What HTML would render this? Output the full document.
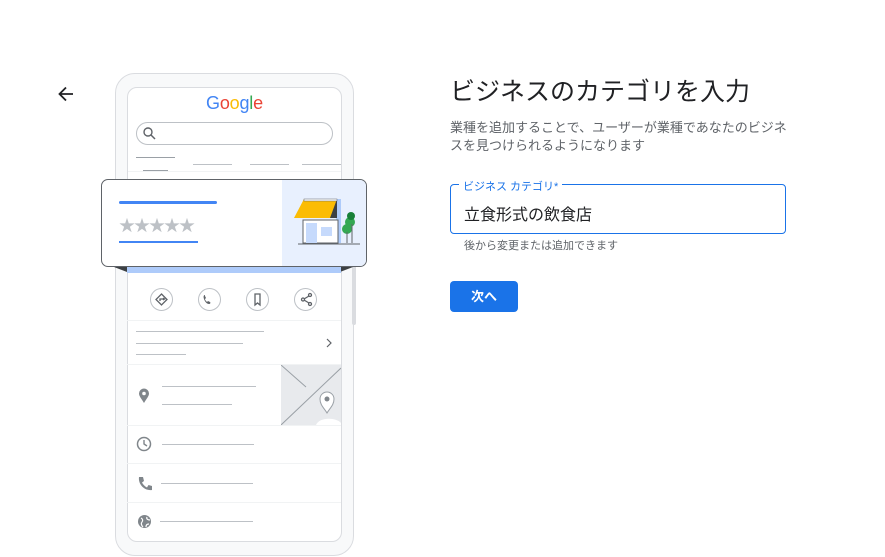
<!DOCTYPE html>
<html><head><meta charset="utf-8"><style>
*{margin:0;padding:0;box-sizing:border-box}
body{width:885px;height:557px;background:#fff;position:relative;overflow:hidden;font-family:"Liberation Sans","Noto Sans CJK JP",sans-serif;color:#202124}
.a{position:absolute}
.ln{position:absolute;height:1px;background:#bdc1c6}
.row{position:absolute;left:127px;width:214px;border-top:1px solid #f1f3f4}
.ci{position:absolute;width:23px;height:23px;border:1.3px solid #bdc1c6;border-radius:50%;top:288px}
</style></head><body>
<svg class="a" style="left:56px;top:85px" width="20" height="18" viewBox="0 0 20 18"><path d="M17 9H4M10 2.5L3.5 9 10 15.5" stroke="#202124" stroke-width="1.8" fill="none"/></svg>

<div class="a" style="left:115px;top:73px;width:239px;height:483px;border:1.5px solid #dadce0;border-radius:20px;background:#f8f9fa"></div>
<div class="a" style="left:127px;top:87px;width:215px;height:455px;border:1px solid #dadce0;border-radius:10px;background:#fff"></div>
<div class="a" style="left:352px;top:265px;width:4px;height:60px;background:#dadce0;border-radius:2px"></div>
<div class="a" style="left:206px;top:93px;font-size:18px;letter-spacing:-0.2px"><span style="color:#4285f4">G</span><span style="color:#ea4335">o</span><span style="color:#fbbc05">o</span><span style="color:#4285f4">g</span><span style="color:#34a853">l</span><span style="color:#ea4335">e</span></div>
<div class="a" style="left:136px;top:122px;width:197px;height:23px;border:1.3px solid #bdc1c6;border-radius:12px"></div>
<svg class="a" style="left:142px;top:126px" width="14" height="14"><circle cx="6" cy="6" r="4" stroke="#5f6368" stroke-width="1.4" fill="none"/><path d="M9 9l4 4" stroke="#5f6368" stroke-width="1.5"/></svg>
<div class="ln" style="left:136px;top:157px;width:39px;background:#9aa0a6"></div>
<div class="ln" style="left:143px;top:170px;width:25px;background:#9aa0a6"></div>
<div class="ln" style="left:193px;top:164px;width:39px"></div>
<div class="ln" style="left:250px;top:164px;width:39px"></div>
<div class="ln" style="left:302px;top:164px;width:39px"></div>
<div class="ln" style="left:128px;top:171px;width:213px;background:#f1f3f4"></div>

<svg class="a" style="left:100px;top:262px" width="267" height="12"><path d="M1 0L27 10V0Z" fill="#3c4043"/><path d="M266 0L240 10V0Z" fill="#3c4043"/></svg>
<div class="a" style="left:127px;top:265px;width:214px;height:8px;background:#aecbfa"></div>
<div class="a" style="left:101px;top:179px;width:266px;height:88px;border:1.3px solid #5f6368;border-radius:7px;background:#fff;overflow:hidden">
 <div class="a" style="left:180px;top:0;width:86px;height:88px;background:#e8f0fe"></div>
 <div class="a" style="left:17px;top:21px;width:98px;height:3px;background:#4285f4;border-radius:2px"></div>
 <div class="a" style="left:17px;top:32px;font-size:16px;color:#bdc1c6;letter-spacing:-1px">★★★★★</div>
 <div class="a" style="left:17px;top:61px;width:79px;height:2px;background:#4285f4"></div>
 <svg class="a" style="left:188px;top:16px" width="70" height="56"><rect x="46" y="3" width="5" height="44" fill="#aecbfa"/><rect x="13" y="24" width="35" height="23" fill="#fff" stroke="#5f6368"/><rect x="16" y="27" width="11" height="20" fill="#c6dafc"/><rect x="31" y="31" width="11" height="9" fill="#c6dafc"/><path d="M4 22L14 3H47V22Z" fill="#fbbc04"/><path d="M40 22L47 3V22Z" fill="#3c4043"/><rect x="14" y="3" width="33" height="2" fill="#fff" stroke="#5f6368" stroke-width=".5"/><circle cx="60" cy="26" r="5" fill="#34a853"/><circle cx="57" cy="33" r="5" fill="#34a853"/><circle cx="61" cy="20" r="4" fill="#188038"/><path d="M57 36V47M62 28V47" stroke="#5f6368"/><path d="M8 48H70" stroke="#5f6368"/></svg>
</div>

<div class="ci" style="left:150px"></div><div class="ci" style="left:198px"></div><div class="ci" style="left:246px"></div><div class="ci" style="left:294px"></div>
<svg class="a" style="left:150px;top:288px" width="180" height="23" fill="none" stroke="#5f6368" stroke-width="1.3"><path d="M11.5 6L17 11.5 11.5 17 6 11.5Z"/><path d="M10 13v-2h4M13 10l1.5 1-1.5 1"/><path d="M55 7c-1 0-2 1-1 4s3 5 5 5c1 0 2-1 1-2l-2-1-1 1c-1-1-2-2-2-3l1-1-1-2z" fill="#5f6368" stroke="none"/><path d="M105 6h5v11l-2.5-2-2.5 2z"/><circle cx="160" cy="7" r="1.5"/><circle cx="153" cy="11.5" r="1.5"/><circle cx="160" cy="16" r="1.5"/><path d="M154 11l5-3M154 12l5 3"/></svg>

<div class="row" style="top:320px;height:44px"></div>
<div class="ln" style="left:136px;top:331px;width:128px"></div>
<div class="ln" style="left:136px;top:343px;width:107px"></div>
<div class="ln" style="left:136px;top:354px;width:50px"></div>
<svg class="a" style="left:325px;top:338px" width="8" height="10"><path d="M2 1l4 4-4 4" stroke="#5f6368" stroke-width="1.2" fill="none"/></svg>
<div class="row" style="top:364px;height:61px"></div>
<svg class="a" style="left:281px;top:365px" width="60" height="60"><rect width="60" height="60" fill="#e8eaed"/><path d="M0 0L25 22M0 60L60 3" stroke="#9aa0a6"/><path d="M35 60c3-8 20-8 25-2v2z" fill="#fff"/><path d="M46 48c-3-5-7-8-7-14a7 7 0 0114 0c0 6-4 9-7 14z" fill="#fff" stroke="#9aa0a6"/><circle cx="46" cy="34" r="2.5" fill="#80868b"/></svg>
<svg class="a" style="left:137px;top:387px" width="14" height="18"><path d="M7 16C4 11 2 9 2 6.5a5 5 0 0110 0C12 9 10 11 7 16z" fill="#80868b"/><circle cx="7" cy="6.5" r="1.8" fill="#fff"/></svg>
<div class="ln" style="left:162px;top:386px;width:94px"></div>
<div class="ln" style="left:162px;top:404px;width:70px"></div>
<div class="row" style="top:425px;height:38px"></div>
<svg class="a" style="left:136px;top:436px" width="16" height="16"><circle cx="8" cy="8" r="6.5" stroke="#80868b" stroke-width="1.5" fill="none"/><path d="M8 4v4l3 2" stroke="#80868b" stroke-width="1.4" fill="none"/></svg>
<div class="ln" style="left:162px;top:444px;width:92px"></div>
<div class="row" style="top:463px;height:39px"></div>
<svg class="a" style="left:137px;top:476px" width="15" height="15"><path d="M2 1h4l1 4-2 1.5c1 2 3 4 5 5L11.5 9l3.5 1v4c-8 1-14-6-13-13z" fill="#80868b"/></svg>
<div class="ln" style="left:161px;top:483px;width:92px"></div>
<div class="row" style="top:502px;height:39px"></div>
<svg class="a" style="left:137px;top:514px" width="16" height="16"><circle cx="7.5" cy="7.5" r="6.5" fill="#80868b"/><path d="M4 4c2 1 2 3 1 4s-1 3 1 5M10 3c-1 2 1 3 3 3M9 13c0-2 1-3 3-3" stroke="#fff" stroke-width="1.2" fill="none"/></svg>
<div class="ln" style="left:160px;top:521px;width:93px"></div>

<div class="a" style="left:450px;top:72px;font-size:25px;color:#202124">ビジネスのカテゴリを入力</div>
<div class="a" style="left:450px;top:119px;font-size:13px;line-height:18px;color:#5f6368;width:340px">業種を追加することで、ユーザーが業種であなたのビジネスを見つけられるようになります</div>
<div class="a" style="left:450px;top:184px;width:336px;height:50px;border:1.3px solid #1a73e8;border-radius:4px"></div>
<div class="a" style="left:459px;top:178px;padding:0 4px;background:#fff;font-size:11px;color:#1a73e8">ビジネス カテゴリ*</div>
<div class="a" style="left:464px;top:201px;font-size:16px;color:#202124">立食形式の飲食店</div>
<div class="a" style="left:464px;top:237px;font-size:11px;color:#5f6368">後から変更または追加できます</div>
<div class="a" style="left:450px;top:281px;width:68px;height:31px;background:#1a73e8;border-radius:4px;color:#fff;font-size:13px;font-weight:bold;text-align:center;line-height:31px">次へ</div>
</body></html>
